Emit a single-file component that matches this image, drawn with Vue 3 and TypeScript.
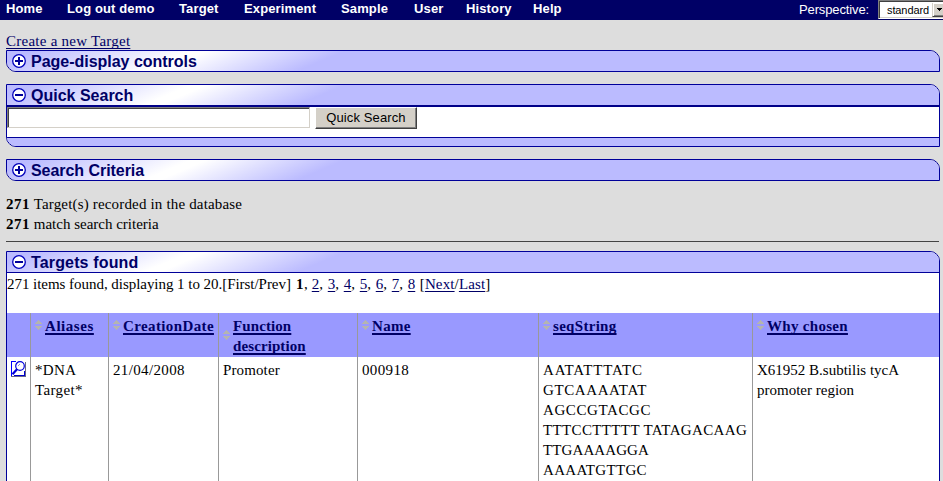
<script setup lang="ts">
interface Column {
  key: string
  label: string
}

const menu: string[] = ['Home', 'Log out demo', 'Target', 'Experiment', 'Sample', 'User', 'History', 'Help']
const pages: string[] = ['2', '3', '4', '5', '6', '7', '8']
const columns: Column[] = [
  { key: 'aliases', label: 'Aliases' },
  { key: 'created', label: 'CreationDate' },
  { key: 'function', label: 'Function description' },
  { key: 'name', label: 'Name' },
  { key: 'seq', label: 'seqString' },
  { key: 'why', label: 'Why chosen' },
]
const sequence: string[] = ['AATATTTATC', 'GTCAAAATAT', 'AGCCGTACGC', 'TTTCCTTTTT TATAGACAAG', 'TTGAAAAGGA', 'AAAATGTTGC']
</script>

<template>
  <div class="page">
    <nav class="bar">
      <div class="menu">
        <a v-for="m in menu" :key="m">{{ m }}</a>
      </div>
      <span class="persp">Perspective:</span>
      <div class="select">
        <span class="value">standard</span>
        <span class="drop"><svg width="5" height="3" viewBox="0 0 5 3" shape-rendering="crispEdges"><path d="M0 0h5v1h-1v1h-1v1h-1v-1h-1v-1h-1z" /></svg></span>
      </div>
    </nav>

    <main>
      <div class="create"><a class="link">Create a new Target</a></div>

      <section class="panel closed">
        <h2 class="head"><svg class="toggle" width="14" height="14" viewBox="0 0 14 14"><circle cx="7" cy="7" r="6.3" /><path d="M3 7h8M7 3v8" /></svg><span class="t1">Page-display controls</span></h2>
      </section>

      <section class="panel quick">
        <h2 class="head"><svg class="toggle" width="14" height="14" viewBox="0 0 14 14"><circle cx="7" cy="7" r="6.3" /><path d="M3 7h8" /></svg><span class="t2">Quick Search</span></h2>
        <div class="form">
          <input type="text" class="field" />
          <button class="btn">Quick Search</button>
        </div>
        <div class="foot"></div>
      </section>

      <section class="panel closed">
        <h2 class="head"><svg class="toggle" width="14" height="14" viewBox="0 0 14 14"><circle cx="7" cy="7" r="6.3" /><path d="M3 7h8M7 3v8" /></svg><span class="t3">Search Criteria</span></h2>
      </section>

      <div class="counts">
        <div class="c1"><b>271</b> Target(s) recorded in the database</div>
        <div class="c2"><b>271</b> match search criteria</div>
      </div>
      <div class="rule"></div>

      <section class="panel found">
        <h2 class="head"><svg class="toggle" width="14" height="14" viewBox="0 0 14 14"><circle cx="7" cy="7" r="6.3" /><path d="M3 7h8" /></svg><span class="t4">Targets found</span></h2>
        <div class="paging"><span class="summary">271 items found, displaying 1 to 20.[First/Prev]</span><b class="current">1</b>,<span v-for="(p, i) in pages" :key="p" class="pg"><a class="link">{{ p }}</a>{{ i < pages.length - 1 ? ',' : '' }}</span><span class="next">[<a class="link">Next</a>/<a class="link">Last</a>]</span></div>
        <div class="grid header">
          <div></div>
          <div v-for="c in columns" :key="c.key" class="th" :class="c.key">
            <svg class="sort" width="7" height="10" viewBox="0 0 7 10" shape-rendering="crispEdges"><path d="M3 0h1v1h1v1h1v1h1v1H0V3h1V2h1V1h1zM0 6h7v1H6v1H5v1H4v1H3V9H2V8H1V7H0z" /></svg>
            <a>{{ c.label }}</a>
          </div>
        </div>
        <div class="grid row">
          <div class="view">
            <svg width="15" height="16" viewBox="0 0 15 16">
              <path d="M0 .5h5M.5 0v15" stroke="#00f" />
              <path d="M14.5 1v14.5M0 15.5h15" stroke="#668" />
              <path d="M3 14.5h11M13.5 10v5" stroke="#00c" />
              <g fill="none" stroke="#00d">
                <circle cx="9" cy="5" r="4.3" stroke-width="1.2" fill="#fff" />
                <path d="M7 5l2-2" stroke="#88e" />
                <path d="M6 8.2L1.5 13.3" stroke-width="2.2" />
              </g>
            </svg>
          </div>
          <div class="alias">*DNA<br />Target*</div>
          <div class="num">21/04/2008</div>
          <div class="promo">Promoter</div>
          <div class="num">000918</div>
          <div class="seqs"><div v-for="s in sequence" :key="s">{{ s }}</div></div>
          <div>X61952 B.subtilis tycA<br />promoter region</div>
        </div>
      </section>
    </main>
  </div>
</template>

<style>
body {
  margin: 0;
  background: #ddd;
}
</style>

<style scoped>
.page {
  width: 943px;
  height: 481px;
  overflow: hidden;
  background: #ddd;
  color: #000;
  font: 15px/20px 'Liberation Serif', serif;
  white-space: nowrap;
}
.page * { box-sizing: border-box; }
.bar {
  display: flex;
  height: 20px;
  background: #006;
  color: #fff;
  font-family: 'Liberation Sans', sans-serif;
}
.menu {
  display: grid;
  grid-template-columns: 61px 112px 65px 97px 73px 52px 67px 60px;
  width: 793px;
  padding-left: 6px;
  font-weight: bold;
  font-size: 13px;
  line-height: 18px;
  letter-spacing: 0.13px;
}
.persp {
  width: 85px;
  padding-left: 6px;
  font-size: 13px;
  line-height: 19px;
  letter-spacing: -0.12px;
}
.select {
  display: flex;
  width: 65px;
  height: 19px;
  background: #fff;
  border: 1px solid #808080;
  border-bottom-color: #fff;
  border-right: 0;
  box-shadow: inset 1px 1px #404040, inset 0 -1px #d4d0c8;
  color: #000;
  font-size: 11px;
  line-height: 19px;
}
.value {
  width: 53px;
  padding-left: 8px;
  letter-spacing: -0.1px;
}
.drop {
  display: flex;
  align-items: center;
  justify-content: flex-end;
  width: 11px;
  height: 14px;
  margin-top: 2px;
  padding-right: 1px;
  background: #d4d0c8;
  border-bottom: 1px solid #404040;
  border-left: 1px solid #d4d0c8;
  box-shadow: inset 1px 1px #fff, inset 0 -1px #808080;
}
main { padding: 0 3px 0 6px; }
.create {
  height: 30px;
  padding-top: 11px;
  letter-spacing: 0.25px;
}
.link {
  color: #006;
  text-decoration: underline;
  text-decoration-thickness: 1px;
  text-decoration-skip-ink: none;
  text-underline-offset: 2px;
}
.panel {
  width: 934px;
  border: 1px solid #009;
  border-top-right-radius: 10px;
  overflow: hidden;
  background: #fff;
}
.closed {
  height: 22px;
  border-bottom-left-radius: 10px;
}
.head {
  display: flex;
  align-items: center;
  height: 20px;
  margin: 0;
  padding-left: 5px;
  background: linear-gradient(157deg, #bbf 10px, #fff 72px, #fff 78px, #bbf 132px);
  color: #006;
  font: bold 16px/20px 'Liberation Sans', sans-serif;
}
.head span { padding: 2px 0 0 5px; }
.t1 { letter-spacing: -0.02px; }
.t3 { letter-spacing: -0.05px; }
.t4 { letter-spacing: 0.15px; }
.toggle {
  fill: #fff;
  stroke: #00b;
  stroke-width: 1.3;
}
.toggle path {
  stroke: #009;
  stroke-width: 2;
}
.quick {
  height: 63px;
  margin: 12px 0;
  border-bottom-left-radius: 10px;
}
.quick .head { box-sizing: content-box; border-bottom: 2px solid #008; }
.form {
  display: flex;
  height: 30px;
}
.field {
  width: 303px;
  height: 21px;
  border: 1px solid #808080;
  border-right-color: #d4d0c8;
  border-bottom-color: #d4d0c8;
  box-shadow: inset 1px 1px #404040;
  background: #fff;
  padding: 0;
}
.btn {
  width: 102px;
  height: 22px;
  margin-left: 5px;
  padding: 0;
  background: #d4d0c8;
  border: 1px solid #fff;
  border-right-color: #404040;
  border-bottom-color: #404040;
  box-shadow: inset -1px -1px #808080;
  color: #000;
  font: 13px/20px 'Liberation Sans', sans-serif;
  letter-spacing: 0.12px;
}
.foot {
  height: 9px;
  border-top: 1px solid #009;
  background: #bbf;
}
.counts { padding-top: 13px; }
.c1 { letter-spacing: 0.17px; }
.counts b { letter-spacing: 0.5px; }
.rule {
  height: 1px;
  margin: 7px 0 9px;
  width: 933px;
  background: #444;
}
.found { height: 260px; }
.found .head { height: 21px; border-bottom: 1px solid #009; }
.paging {
  display: flex;
  height: 40px;
  padding-top: 1px;
}
.summary { width: 289px; letter-spacing: -0.04px; }
.pg { width: 16px; }
.pg:nth-last-child(2) { width: 12px; }
.current { width: 8px; }
.current + .pg { margin-left: 4px; }
.next { letter-spacing: 0.13px; }
.grid {
  display: grid;
  grid-template-columns: 24px 78px 110px 139px 181px 214px 186px;
}
.grid > div {
  padding: 3px 0 0 4px;
  border-right: 1px solid #999;
}
.grid > div:last-child { border-right: 0; }
.header {
  height: 44px;
  background: #99f;
  color: #006;
  font-weight: bold;
  letter-spacing: 0.3px;
}
.header .th {
  display: flex;
  align-items: flex-start;
  white-space: normal;
}
.aliases { letter-spacing: 0.55px; }
.function { letter-spacing: 0.1px; }
.created { letter-spacing: 0.38px; }
.sort {
  flex: none;
  margin: 4px 3px 0 0;
  fill: #b4b4b0;
}
.function .sort { margin-top: 14px; }
.th a {
  text-decoration: underline;
  text-decoration-thickness: 2px;
  text-decoration-skip-ink: none;
  text-underline-offset: 2px;
}
.row { height: 160px; }
.row > div.view { padding: 4px 0 0 4px; }
.view svg { display: block; }
.alias { letter-spacing: 0.35px; }
.num { letter-spacing: 0.35px; }
.promo { letter-spacing: 0.12px; }
.seqs div { letter-spacing: 0.6px; }
.seqs div:nth-child(1) { letter-spacing: 0.8px; }
.seqs div:nth-child(4) { letter-spacing: 0.36px; }
.seqs div:nth-child(5) { letter-spacing: 0.1px; }
.seqs div:nth-child(6) { letter-spacing: 0.3px; }
</style>
